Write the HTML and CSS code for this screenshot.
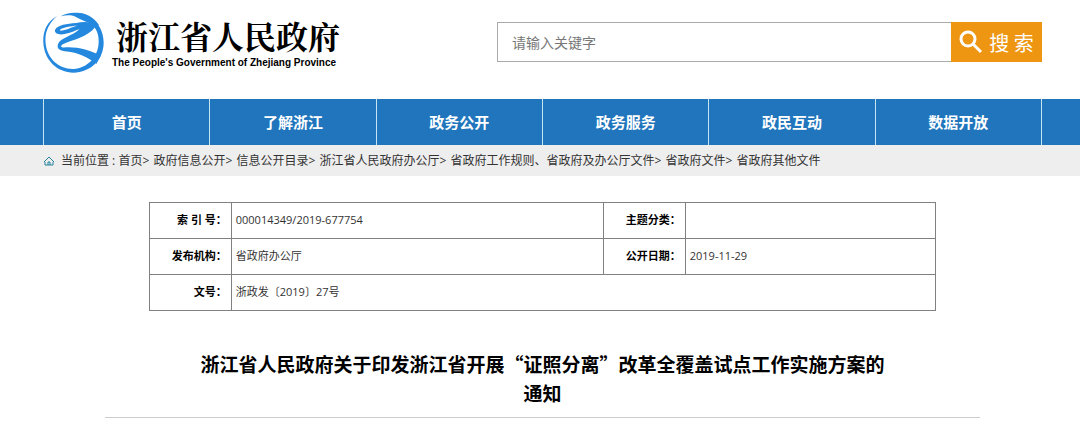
FILE: index.html
```html
<!DOCTYPE html>
<html lang="zh-CN">
  <head>
    <meta charset="UTF-8" />
    <title>浙江省人民政府</title>
    <link rel="stylesheet" href="styles.css">
  </head>
  <body>
    <header class="wrap header">
      <a class="logo" href="#">
        <svg class="logo-mark" viewBox="20 18 182 182" aria-hidden="true">
          <path d="M62 30C30 48 19 78 21 110C24 162 62 199 111 199C161 199 201 160 201 109C201 58 163 20 114 20C98 20 84 24 73 31C91 26 108 27 122 33C136 40 149 44 165 54C181 69 187 88 186 109C185 152 152 186 111 188C66 189 33 157 28 113C24 80 36 53 62 30Z" />
          <path d="M165 50C146 47 133 48 119 51C91 54 64 56 56 71C53 82 67 87 84 84C103 80 116 74 129 69C108 90 74 94 65 113C59 130 73 134 91 136C121 139 155 152 179 173L193 148C158 132 122 121 83 124C73 124 71 119 79 114C109 101 153 93 176 63ZM122 59C107 63 86 73 73 74C66 72 76 66 92 63C102 61 112 59 122 59Z" />
          <path d="M105 25C119 36 142 44 166 55L178 65L187 57C166 27 137 16 105 22Z" />
        </svg>
        <span class="logo-text">
          <strong>浙江省人民政府</strong>
          <small>The People's Government of Zhejiang Province</small>
        </span>
      </a>
      <form class="search">
        <input type="text" placeholder="请输入关键字" aria-label="请输入关键字" />
        <button type="button">
          <svg viewBox="0 0 24 24" aria-hidden="true">
            <circle cx="9" cy="9" r="7" />
            <path d="M14 14L22 22" />
          </svg>
          搜 索
        </button>
      </form>
    </header>

    <nav class="nav">
      <ul class="wrap">
        <li><a href="#">首页</a></li>
        <li><a href="#">了解浙江</a></li>
        <li><a href="#">政务公开</a></li>
        <li><a href="#">政务服务</a></li>
        <li><a href="#">政民互动</a></li>
        <li><a href="#">数据开放</a></li>
      </ul>
    </nav>

    <div class="location">
      <div class="wrap">
        <svg viewBox="0 0 12 10" aria-hidden="true">
          <path d="M1 6L6 1L11 6M2 6V9H10V6M5 9V6H7V9" />
        </svg>
        <span>当前位置 : <a href="#">首页</a>&gt; <a href="#">政府信息公开</a>&gt; <a href="#">信息公开目录</a>&gt; <a href="#">浙江省人民政府办公厅</a>&gt; <a href="#">省政府工作规则、省政府及办公厅文件</a>&gt; <a href="#">省政府文件</a>&gt; <a href="#">省政府其他文件</a></span>
      </div>
    </div>

    <main class="article">
      <table class="info">
        <tr>
          <th scope="row">索 引 号：</th>
          <td class="wide">000014349/2019-677754</td>
          <th scope="row">主题分类：</th>
          <td></td>
        </tr>
        <tr>
          <th scope="row">发布机构：</th>
          <td>省政府办公厅</td>
          <th scope="row">公开日期：</th>
          <td>2019-11-29</td>
        </tr>
        <tr>
          <th scope="row">文号：</th>
          <td colspan="3">浙政发〔2019〕27号</td>
        </tr>
      </table>
      <h1>浙江省人民政府关于印发浙江省开展“证照分离”改革全覆盖试点工作实施方案的<br />通知</h1>
    </main>
  </body>
</html>
```

FILE: styles.css
```css
* {
  box-sizing: border-box;
}

body {
  margin: 0;
  color: #333;
  background: #fff;
  font: 12px/20px "Open Sans", "Noto Sans CJK SC", sans-serif;
}

a {
  color: inherit;
  text-decoration: none;
}

.wrap {
  margin: 0;
  padding: 0 38px 0 43px;
}

.header {
  height: 99px;
  display: flex;
  justify-content: space-between;
  align-items: flex-start;
}

.logo {
  display: flex;
  gap: 8px;
  padding-top: 12px;
  color: #000;
}

.logo-mark {
  width: 61px;
  height: 61px;
  fill: #2488df;
}

.logo-text {
  display: flex;
  flex-direction: column;
  padding-top: 3px;

  > strong {
    padding-left: 4px;
    font: bold 32px/40px "Noto Serif CJK SC", "Noto Sans CJK SC", serif;
  }

  > small {
    font: bold 10px/16px "Liberation Sans", Arial, sans-serif;
  }
}

.search {
  display: flex;
  width: 545px;
  height: 40px;
  margin-top: 22px;

  > input {
    flex: 1;
    min-width: 0;
    padding: 0 14px;
    border: 1px solid #aaa;
    border-right: 0;
    border-radius: 0;
    font: 14px "Noto Sans CJK SC", sans-serif;
    outline: none;

    &::placeholder {
      color: #777;
    }
  }

  > button {
    display: flex;
    align-items: center;
    justify-content: center;
    gap: 6px;
    width: 91px;
    padding: 0;
    border: 0;
    color: #fff;
    background: #ee9611;
    font: 20px "Noto Sans CJK SC", sans-serif;
  }

  svg {
    width: 24px;
    height: 24px;
    fill: none;
    stroke: #fff;
    stroke-width: 3;
  }
}

.nav {
  background: #2075bd;

  > ul {
    display: flex;
    list-style: none;
  }

  li {
    flex: 1;
    border-left: 1px solid #c5e5f4;

    &:last-child {
      border-right: 1px solid #c5e5f4;
    }
  }

  a {
    display: block;
    color: #fff;
    font-size: 15px;
    font-weight: bold;
    line-height: 46px;
    text-align: center;
  }
}

.location {
  background: #eee;

  > .wrap {
    display: flex;
    align-items: center;
    gap: 6px;
    height: 31px;
  }

  svg {
    width: 12px;
    height: 10px;
    fill: none;
    stroke: #24839c;
  }

  a + a {
    margin-left: 1px;
  }
}

.article {
  margin: 26px 100px 0 105px;
  border-bottom: 1px solid #ccc;

  > h1 {
    margin: 0;
    padding: 38px 0 10px;
    color: #000;
    font: bold 19px/29px "Noto Sans CJK SC", sans-serif;
    text-align: center;
  }
}

.info {
  width: 90%;
  margin: 0 auto;
  border-collapse: collapse;
  table-layout: fixed;
  font-size: 11px;

  th,
  td {
    height: 36px;
    padding: 0 4px 2px;
    border: 1px solid #808080;
    text-align: left;
  }

  th {
    width: 82px;
    color: #000;
    text-align: right;
  }

  .wide {
    width: 372px;
  }
}
```
